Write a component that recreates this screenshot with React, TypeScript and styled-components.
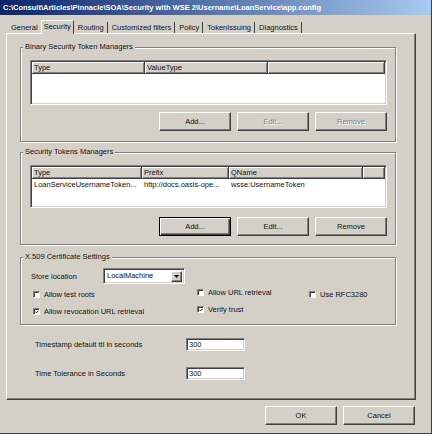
import styled, { createGlobalStyle, css } from "styled-components";

const GlobalStyle = createGlobalStyle`
	html, body {
		margin: 0;
		padding: 0;
		background: #d4d0c8;
	}
	body {
		font-family: "Liberation Sans", Arial, sans-serif;
		font-size: 7.5px;
		color: #111;
	}
	* {
		box-sizing: border-box;
	}
`;

type Col = { title: string; width: string };

const binaryCols: Col[] = [
	{ title: "Type", width: "113px" },
	{ title: "ValueType", width: "123px" },
	{ title: "", width: "1fr" },
];

const tokenCols: Col[] = [
	{ title: "Type", width: "110px" },
	{ title: "Prefix", width: "87px" },
	{ title: "QName", width: "134px" },
	{ title: "", width: "1fr" },
];

const tokenRows = [["LoanServiceUsernameToken...", "http://docs.oasis-ope...", "wsse:UsernameToken", ""]];

const tabs = ["General", "Security", "Routing", "Customized filters", "Policy", "TokenIssuing", "Diagnostics"];

function Check({ checked }: { checked?: boolean }) {
	return (
		<Box>
			{checked && (
				<svg width="6" height="6" viewBox="0 0 6 6">
					<polyline points="0.5,2.5 2.2,4.3 5.5,0.8" fill="none" stroke="#000" strokeWidth="1.3" />
				</svg>
			)}
		</Box>
	);
}

function List({ cols, rows, height }: { cols: Col[]; rows: string[][]; height: number }) {
	const template = cols.map((c) => c.width).join(" ");
	return (
		<ListView $h={height}>
			<ListRow $cols={template}>
				{cols.map((c, i) => (
					<HeaderCell key={i}>{c.title}</HeaderCell>
				))}
			</ListRow>
			{rows.map((r, i) => (
				<ListRow key={i} $cols={template}>
					{r.map((v, j) => (
						<Cell key={j}>{v}</Cell>
					))}
				</ListRow>
			))}
		</ListView>
	);
}

export default function App() {
	return (
		<>
			<GlobalStyle />
			<Window>
				<TitleBar>C:\Consult\Articles\Pinnacle\SOA\Security with WSE 2\Username\LoanService\app.config</TitleBar>
				<Body>
					<TabStrip>
						{tabs.map((t, i) => (
							<Tab key={t} $active={i === 1} $sep={i !== 0}>
								{t}
							</Tab>
						))}
					</TabStrip>
					<Panel>
						<Group $h={100}>
							<Legend>Binary Security Token Managers</Legend>
							<List cols={binaryCols} rows={[]} height={45} />
							<ButtonRow $top={7}>
								<Button>Add...</Button>
								<Button disabled>Edit...</Button>
								<Button disabled>Remove</Button>
							</ButtonRow>
						</Group>

						<Group $h={98} $gap={5}>
							<Legend>Security Tokens Managers</Legend>
							<List cols={tokenCols} rows={tokenRows} height={43} />
							<ButtonRow $top={9}>
								<Button $default>Add...</Button>
								<Button>Edit...</Button>
								<Button>Remove</Button>
							</ButtonRow>
						</Group>

						<Group $h={73} $gap={7} $top={6}>
							<Legend>X.509 Certificate Settings</Legend>
							<StoreRow>
								<StoreLabel>Store location</StoreLabel>
								<Select>
									<SelectText>LocalMachine</SelectText>
									<DropButton>
										<svg width="5" height="3" viewBox="0 0 5 3">
											<polygon points="0,0 5,0 2.5,3" fill="#000" />
										</svg>
									</DropButton>
								</Select>
							</StoreRow>
							<CheckGrid>
								<CheckItem>
									<Check />
									Allow test roots
								</CheckItem>
								<CheckItem $lift>
									<Check />
									Allow URL retrieval
								</CheckItem>
								<CheckItem>
									<Check />
									Use RFC3280
								</CheckItem>
								<CheckItem>
									<Check checked />
									Allow revocation URL retrieval
								</CheckItem>
								<CheckItem $lift>
									<Check checked />
									Verify trust
								</CheckItem>
							</CheckGrid>
						</Group>

						<FieldGrid>
							<span>Timestamp default ttl in seconds</span>
							<TextBox>300</TextBox>
							<span>Time Tolerance in Seconds</span>
							<TextBox>300</TextBox>
						</FieldGrid>
					</Panel>
					<Footer>
						<Button>OK</Button>
						<Button>Cancel</Button>
					</Footer>
				</Body>
			</Window>
		</>
	);
}

const Window = styled.div`
	width: 432px;
	height: 434px;
	background: #d4d0c8;
	border-right: 1px solid #404040;
	border-bottom: 1px solid #404040;
	display: flex;
	flex-direction: column;
	overflow: hidden;
`;

const TitleBar = styled.div`
	height: 15px;
	line-height: 15px;
	padding-left: 3px;
	background: linear-gradient(to right, #0a246a 0%, #a6caf0 100%);
	color: #fff;
	font-weight: bold;
	font-size: 7.5px;
	white-space: nowrap;
	overflow: hidden;
`;

const Body = styled.div`
	padding: 5px 0 0 6px;
`;

const TabStrip = styled.div`
	display: flex;
	align-items: flex-end;
	height: 13px;
	padding-left: 1px;
`;

const Tab = styled.div<{ $active?: boolean; $sep?: boolean }>`
	height: 11px;
	line-height: 11px;
	padding: 0 3px 0 4px;
	white-space: nowrap;
	border-right: ${(p) => (p.$sep ? "1px solid #404040" : "none")};
	${(p) =>
		p.$active &&
		css`
			position: relative;
			z-index: 1;
			height: 14px;
			line-height: 12px;
			margin-bottom: -1px;
			padding: 0 2px;
			background: #d4d0c8;
			border-top: 1px solid #fff;
			border-left: 1px solid #fff;
		`}
`;

const Panel = styled.div`
	width: 410px;
	height: 367px;
	border: 1px solid;
	border-color: #fff #404040 #404040 #fff;
	box-shadow: inset -1px -1px 0 #808080;
	padding: 8px 0 0 13px;
	display: flex;
	flex-direction: column;
`;

const Group = styled.fieldset<{ $h: number; $gap?: number; $top?: number }>`
	margin: ${(p) => p.$gap ?? 0}px 0 0 0;
	width: 376px;
	height: ${(p) => p.$h}px;
	min-width: 0;
	padding: ${(p) => p.$top ?? 8}px 8px 0 9px;
	border: 1px solid #808080;
	box-shadow: inset 1px 1px 0 #fff, 1px 1px 0 #fff;
`;

const Legend = styled.legend`
	margin-left: -7px;
	padding: 0 2px;
	line-height: 10px;
	background: #d4d0c8;
`;

const ListView = styled.div<{ $h: number }>`
	width: 357px;
	height: ${(p) => p.$h}px;
	background: #fff;
	border: 1px solid;
	border-color: #808080 #fff #fff #808080;
	box-shadow: inset 1px 1px 0 #404040, inset -1px -1px 0 #d4d0c8;
	padding: 1px;
	overflow: hidden;
`;

const ListRow = styled.div<{ $cols: string }>`
	display: grid;
	grid-template-columns: ${(p) => p.$cols};
`;

const HeaderCell = styled.div`
	height: 12px;
	line-height: 11px;
	padding-left: 2px;
	background: #d4d0c8;
	border-right: 1px solid #404040;
	border-bottom: 1px solid #404040;
	box-shadow: inset 1px 1px 0 #fff, inset -1px -1px 0 #808080;
	white-space: nowrap;
	overflow: hidden;
`;

const Cell = styled.div`
	height: 12px;
	line-height: 12px;
	padding-left: 2px;
	white-space: nowrap;
	overflow: hidden;
`;

const ButtonRow = styled.div<{ $top: number }>`
	display: flex;
	justify-content: flex-end;
	gap: 6px;
	margin-top: ${(p) => p.$top}px;
`;

const Button = styled.button<{ $default?: boolean }>`
	width: 72px;
	height: 19px;
	padding: 0;
	font: inherit;
	color: #111;
	background: #d4d0c8;
	border: 1px solid;
	border-color: #fff #404040 #404040 #fff;
	box-shadow: inset -1px -1px 0 #808080;
	&:disabled {
		color: #808080;
		text-shadow: 1px 1px 0 #fff;
	}
	${(p) =>
		p.$default &&
		css`
			border-color: #000;
			box-shadow: inset 1px 1px 0 #fff, inset -1px -1px 0 #404040, inset -2px -2px 0 #808080;
		`}
`;

const StoreRow = styled.div`
	display: flex;
	align-items: center;
	height: 16px;
	padding-left: 1px;
`;

const StoreLabel = styled.span`
	width: 72px;
`;

const Select = styled.div`
	width: 82px;
	height: 16px;
	display: flex;
	align-items: center;
	justify-content: space-between;
	background: #fff;
	border: 1px solid;
	border-color: #808080 #fff #fff #808080;
	box-shadow: inset 1px 1px 0 #404040, inset -1px -1px 0 #d4d0c8;
	padding: 1px 2px 1px 3px;
`;

const SelectText = styled.span`
	line-height: 12px;
`;

const DropButton = styled.div`
	width: 11px;
	height: 11px;
	display: flex;
	align-items: center;
	justify-content: center;
	background: #d4d0c8;
	border: 1px solid;
	border-color: #fff #404040 #404040 #fff;
	box-shadow: inset -1px -1px 0 #808080;
`;

const CheckGrid = styled.div`
	display: grid;
	grid-template-columns: 164px 112px 1fr;
	row-gap: 3px;
	margin-top: 3px;
	padding-left: 3px;
`;

const CheckItem = styled.label<{ $lift?: boolean }>`
	display: flex;
	align-items: center;
	gap: 4px;
	height: 14px;
	white-space: nowrap;
	margin-top: ${(p) => (p.$lift ? "-2px" : "0")};
`;

const Box = styled.span`
	width: 7px;
	height: 7px;
	display: flex;
	align-items: center;
	justify-content: center;
	background: #fff;
	border: 1px solid;
	border-color: #808080 #fff #fff #808080;
	box-shadow: inset 1px 1px 0 #404040;
	padding-left: 1px;
	padding-top: 1px;
`;

const FieldGrid = styled.div`
	display: grid;
	grid-template-columns: 151px 59px;
	row-gap: 16px;
	align-items: center;
	margin: 13px 0 0 15px;
`;

const TextBox = styled.div`
	width: 59px;
	height: 13px;
	line-height: 11px;
	padding-left: 2px;
	background: #fff;
	border: 1px solid;
	border-color: #808080 #fff #fff #808080;
	box-shadow: inset 1px 1px 0 #404040, inset -1px -1px 0 #d4d0c8;
`;

const Footer = styled.div`
	display: flex;
	justify-content: flex-end;
	gap: 6px;
	width: 410px;
	margin-top: 6px;
	padding-right: 1px;
`;
